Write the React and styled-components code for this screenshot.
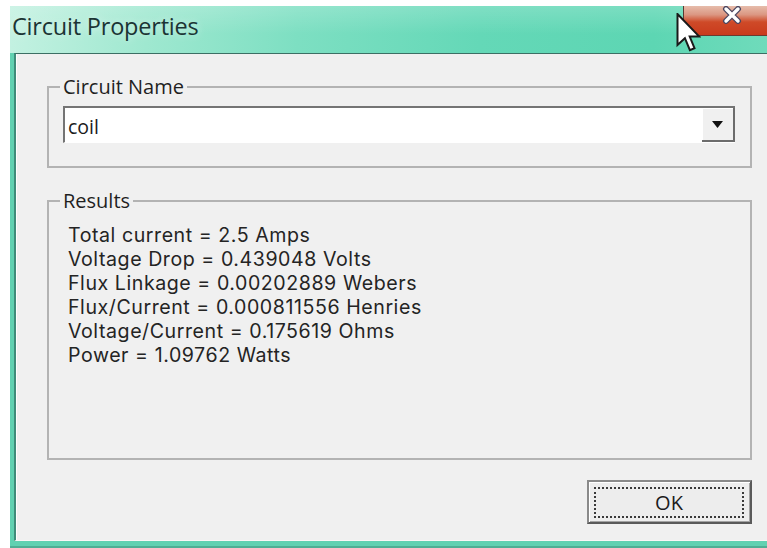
import React from 'react'
import styled, { createGlobalStyle } from 'styled-components'

const GlobalStyle = createGlobalStyle`
  html, body {
    margin: 0;
    padding: 0;
    background: #ffffff;
    overflow: hidden;
  }
  body {
    font-family: "Open Sans", "Noto Sans", sans-serif;
  }
`

const Screen = styled.div`
  width: 767px;
  height: 548px;
  padding: 6px 0 0 10px;
  box-sizing: border-box;
  overflow: hidden;
  position: relative;
`

const Window = styled.div`
  width: 757px;
  height: 542px;
  display: flex;
  flex-direction: column;
  background: #61d1b1;
`

const TitleBar = styled.div`
  height: 47px;
  flex: none;
  display: flex;
  align-items: flex-start;
  justify-content: space-between;
  background:
    linear-gradient(180deg, rgba(255, 255, 255, 0.18) 0%, rgba(255, 255, 255, 0) 60%),
    linear-gradient(90deg, #c3f1e1 0%, #9fe8d0 18%, #7ddfc2 38%, #64d8b7 62%, #5dd6b3 85%, #6fdbbb 100%);
`

const Title = styled.span`
  margin: 4px 0 0 2px;
  font-size: 23.5px;
  color: #1b3434;
  text-shadow: 0 0 8px rgba(255, 255, 255, 0.6);
  letter-spacing: -0.2px;
`

const CloseButton = styled.div`
  width: 84px;
  height: 30px;
  display: flex;
  justify-content: center;
  align-items: flex-start;
  box-sizing: border-box;
  border-left: 1px solid #5a3a32;
  border-bottom: 1px solid #6a3b30;
  background: linear-gradient(180deg, #e6bcab 0%, #db9782 30%, #cf4a28 55%, #c93a1c 100%);
`

const CloseGlyph = styled.svg`
  width: 20px;
  height: 18px;
  margin-left: 12px;
`

const Cursor = styled.svg`
  position: absolute;
  left: 676px;
  top: 13px;
  width: 25px;
  height: 40px;
`

const Body = styled.div`
  flex: 1;
  display: flex;
  padding: 0 0 7px 4px;
  box-shadow: inset 0 -2px 0 #4fae94;
`

const Client = styled.div`
  flex: 1;
  display: flex;
  flex-direction: column;
  gap: 20px;
  padding: 20px 15px 16px 31px;
  background: #f0f0f0;
  border-top: 1px solid #3c6f64;
  border-left: 2px solid #3f8c7a;
  border-bottom: 1px solid #fbf6f6;
  box-shadow: inset 1px 0 0 #ffffff;
`

const Group = styled.fieldset`
  margin: 0;
  padding: 6px 15px 23px 14px;
  border: 2px solid #b3b3b3;
  min-width: 0;
  flex: ${props => (props.$grow ? 1 : 'none')};
`

const Legend = styled.legend`
  padding: 0 3px;
  margin-left: -3px;
  font-size: 20px;
  line-height: 26px;
  color: #1f1f1f;
`

const Combo = styled.div`
  height: 37px;
  display: flex;
  box-sizing: border-box;
  border-top: 2px solid #747474;
  border-left: 2px solid #747474;
  border-bottom: 1px solid #ffffff;
  background: #ffffff;
`

const ComboText = styled.div`
  flex: 1;
  display: flex;
  align-items: center;
  padding: 3px 0 0 3px;
  font-size: 19.5px;
  color: #1b1b1b;
`

const DropButton = styled.div`
  width: 33px;
  display: flex;
  align-items: center;
  justify-content: center;
  box-sizing: border-box;
  background: #f0f0f0;
  border-right: 2px solid #6c6c6c;
  border-bottom: 2px solid #6c6c6c;
  box-shadow: inset 1px 1px 0 #ffffff;
`

const Arrow = styled.svg`
  width: 11px;
  height: 7px;
  margin-top: 1px;
`

const ResultList = styled.div`
  padding: 3px 0 0 5px;
`

const ResultLine = styled.div`
  font-family: Inter, "Open Sans", sans-serif;
  font-size: 19.6px;
  line-height: 24px;
  letter-spacing: 0.55px;
  color: #242424;
  white-space: nowrap;
`

const ButtonRow = styled.div`
  display: flex;
  justify-content: flex-end;
`

const PushButton = styled.div`
  width: 165px;
  height: 44px;
  box-sizing: border-box;
  display: flex;
  padding: 5px 6px 4px 5px;
  background: #ededed;
  border: 2px solid;
  border-color: #8a8a8a #5a5a5a #5a5a5a #8a8a8a;
  box-shadow: inset 1px 1px 0 #ffffff, inset -1px -1px 0 #a3a3a3;
`

const FocusRing = styled.div`
  flex: 1;
  display: flex;
  align-items: center;
  justify-content: center;
  border: 2px dotted #3a3a3a;
  font-size: 20px;
  color: #1c1c1c;
`

const results = [
  'Total current = 2.5 Amps',
  'Voltage Drop = 0.439048 Volts',
  'Flux Linkage = 0.00202889 Webers',
  'Flux/Current = 0.000811556 Henries',
  'Voltage/Current = 0.175619 Ohms',
  'Power = 1.09762 Watts'
]

const App = () => (
  <Screen>
    <GlobalStyle />
    <Window>
      <TitleBar>
        <Title>Circuit Properties</Title>
        <CloseButton>
          <CloseGlyph viewBox="0 0 20 18">
            <path d="M4 3 L16 15 M16 3 L4 15" stroke="#4a4660" strokeWidth="6" strokeLinecap="round" />
            <path d="M4 3 L16 15 M16 3 L4 15" stroke="#ffffff" strokeWidth="3.4" strokeLinecap="round" />
          </CloseGlyph>
        </CloseButton>
      </TitleBar>
      <Body>
        <Client>
          <Group>
            <Legend>Circuit Name</Legend>
            <Combo>
              <ComboText>coil</ComboText>
              <DropButton>
                <Arrow viewBox="0 0 11 7">
                  <path d="M0 0 H11 L5.5 7 Z" fill="#111111" />
                </Arrow>
              </DropButton>
            </Combo>
          </Group>
          <Group $grow>
            <Legend>Results</Legend>
            <ResultList>
              {results.map((line) => (
                <ResultLine key={line}>{line}</ResultLine>
              ))}
            </ResultList>
          </Group>
          <ButtonRow>
            <PushButton>
              <FocusRing>OK</FocusRing>
            </PushButton>
          </ButtonRow>
        </Client>
      </Body>
    </Window>
    <Cursor viewBox="0 0 12 20">
      <path
        d="M0.5 0.5 L0.5 16 L4.2 12.6 L6.7 18.6 L9 17.6 L6.6 11.8 L11.4 11.8 Z"
        fill="#ffffff"
        stroke="#1a1a1a"
        strokeWidth="1"
        strokeLinejoin="miter"
      />
    </Cursor>
  </Screen>
)

export default App
